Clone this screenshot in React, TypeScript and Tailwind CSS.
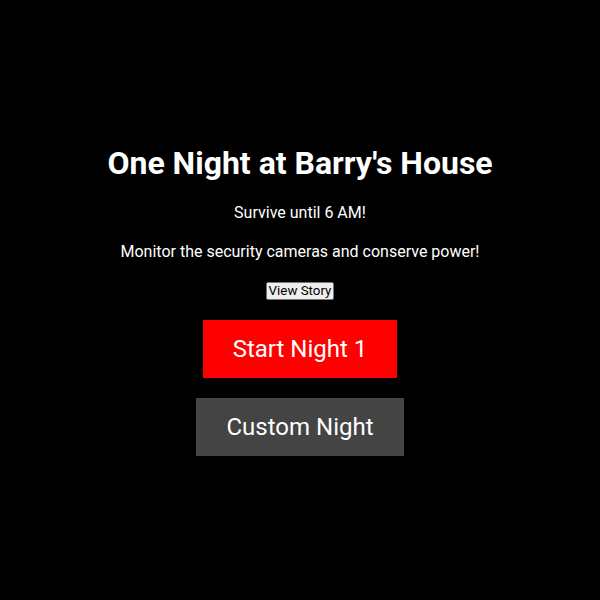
export default function App() {
  return (
    <div className="flex h-[600px] w-full flex-col items-center justify-center bg-black text-white [font-family:Roboto,'Liberation_Sans',sans-serif]">
      <h1 className="text-[32px] font-bold leading-[38px]">One Night at Barry's House</h1>
      <p className="mt-5 text-base leading-[22px]">Survive until 6 AM!</p>
      <p className="mt-[17px] text-base leading-[22px]">Monitor the security cameras and conserve power!</p>
      <button className="mt-[19px] h-[18px] rounded-[2px] border border-[#767676] bg-[#efefef] px-[2px] text-[13.33px] leading-[16px] text-black">
        View Story
      </button>
      <button className="mt-5 h-[58px] w-[194px] bg-[#ff0000] text-2xl text-white">Start Night 1</button>
      <button className="mt-5 h-[58px] w-[208px] bg-[#444444] text-2xl text-white">Custom Night</button>
    </div>
  );
}
